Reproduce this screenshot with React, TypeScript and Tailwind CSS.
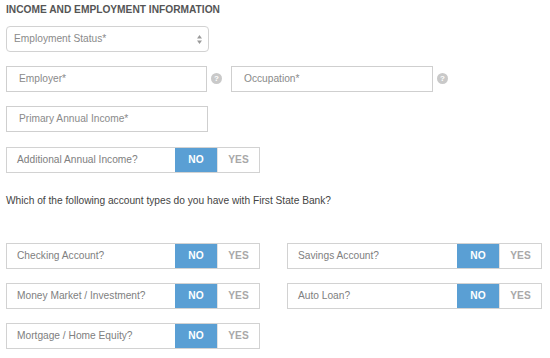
import React from 'react';

const FONT = { fontFamily: '"Liberation Sans", Arial, sans-serif' };

function HelpIcon() {
  return (
    <span className="ml-[4px] mt-[7px] flex h-[11px] w-[11px] shrink-0 items-center justify-center self-start rounded-full bg-[#c9c9c9] text-[8px] font-bold leading-none text-white">
      ?
    </span>
  );
}

function TextField({ placeholder, width }: { placeholder: string; width: string }) {
  return (
    <div
      className={`flex h-[26px] ${width} items-center border border-[#cfcfcf] bg-white pl-[12px] text-[10.2px] text-[#8a8a8a]`}
    >
      {placeholder}
    </div>
  );
}

function Toggle({ label }: { label: string }) {
  return (
    <div className="flex h-[26px] w-full border border-[#d2d2d2] bg-white">
      <div className="flex flex-1 items-center pl-[10px] text-[10.2px] text-[#808080]">{label}</div>
      <div className="flex w-[42px] items-center justify-center bg-[#5a9fd4] text-[10.2px] font-bold text-white">
        NO
      </div>
      <div className="flex w-[42px] items-center justify-center border-l border-[#e2e2e2] text-[10.2px] font-bold text-[#a8a8a8]">
        YES
      </div>
    </div>
  );
}

const ACCOUNTS = [
  'Checking Account?',
  'Savings Account?',
  'Money Market / Investment?',
  'Auto Loan?',
  'Mortgage / Home Equity?',
];

export default function App() {
  return (
    <div className="h-[358px] w-[550px] bg-white pl-[6px] pt-[4px]" style={FONT}>
      <h2 className="text-[10.2px] font-bold leading-[12px] text-[#555555]">
        INCOME AND EMPLOYMENT INFORMATION
      </h2>

      {/* Employment status select */}
      <div className="mt-[10px] flex h-[26px] w-[203px] items-center justify-between rounded-[4px] border border-[#d2d2d2] bg-white pl-[7px] pr-[6px] text-[10.2px] text-[#8a8a8a]">
        <span>Employment Status*</span>
        <svg width="5" height="9" viewBox="0 0 5 9" fill="#9a9a9a">
          <path d="M2.5 0 L5 3.5 H0 Z" />
          <path d="M2.5 9 L5 5.5 H0 Z" />
        </svg>
      </div>

      <div className="mt-[14px] flex">
        <TextField placeholder="Employer*" width="w-[201px]" />
        <HelpIcon />
        <div className="ml-[9px]">
          <TextField placeholder="Occupation*" width="w-[202px]" />
        </div>
        <HelpIcon />
      </div>

      <div className="mt-[14px]">
        <TextField placeholder="Primary Annual Income*" width="w-[202px]" />
      </div>

      <div className="mt-[15px] w-[254px]">
        <Toggle label="Additional Annual Income?" />
      </div>

      <p className="mt-[21px] text-[10.2px] leading-[14px] text-[#444444]">
        Which of the following account types do you have with First State Bank?
      </p>

      <div className="mt-[35px] grid w-[536px] grid-cols-[254px_255px] gap-x-[27px] gap-y-[14px]">
        {ACCOUNTS.map((a) => (
          <Toggle key={a} label={a} />
        ))}
      </div>
    </div>
  );
}
